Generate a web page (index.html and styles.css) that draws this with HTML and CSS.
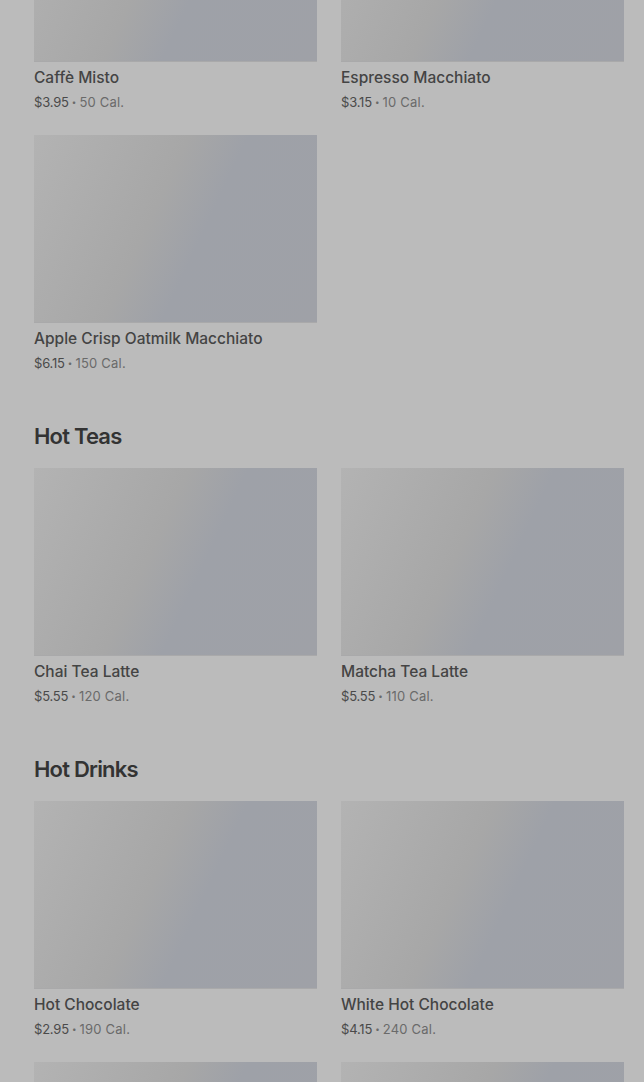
FILE: index.html
```html
<!DOCTYPE html>
<html lang="en">
<head>
  <meta charset="UTF-8">
  <title>Menu</title>
  <link rel="stylesheet" href="styles.css">
</head>
<body>
  <div class="menu">

    <!-- Hot Coffees (scrolled) -->
    <section class="category">
      <div class="grid">
        <div class="product">
          <div class="thumb"></div>
          <h3>Caffè Misto</h3>
          <p class="meta"><span class="price">$3.95</span><span class="dot">•</span>50 Cal.</p>
        </div>
        <div class="product">
          <div class="thumb"></div>
          <h3>Espresso Macchiato</h3>
          <p class="meta"><span class="price">$3.15</span><span class="dot">•</span>10 Cal.</p>
        </div>
        <div class="product">
          <div class="thumb"></div>
          <h3>Apple Crisp Oatmilk Macchiato</h3>
          <p class="meta"><span class="price">$6.15</span><span class="dot">•</span>150 Cal.</p>
        </div>
      </div>
    </section>

    <section class="category">
      <h2>Hot Teas</h2>
      <div class="grid">
        <div class="product">
          <div class="thumb"></div>
          <h3>Chai Tea Latte</h3>
          <p class="meta"><span class="price">$5.55</span><span class="dot">•</span>120 Cal.</p>
        </div>
        <div class="product">
          <div class="thumb"></div>
          <h3>Matcha Tea Latte</h3>
          <p class="meta"><span class="price">$5.55</span><span class="dot">•</span>110 Cal.</p>
        </div>
      </div>
    </section>

    <section class="category">
      <h2>Hot Drinks</h2>
      <div class="grid">
        <div class="product">
          <div class="thumb"></div>
          <h3>Hot Chocolate</h3>
          <p class="meta"><span class="price">$2.95</span><span class="dot">•</span>190 Cal.</p>
        </div>
        <div class="product">
          <div class="thumb"></div>
          <h3>White Hot Chocolate</h3>
          <p class="meta"><span class="price">$4.15</span><span class="dot">•</span>240 Cal.</p>
        </div>
        <div class="product">
          <div class="thumb"></div>
        </div>
        <div class="product">
          <div class="thumb"></div>
        </div>
      </div>
    </section>

  </div>
</body>
</html>
```

FILE: styles.css
```css
body {
  font-family: 'Inter', 'Noto Sans', sans-serif;
  background: #bbbbbb;
  margin: 0;
  padding: 0;
  overflow: hidden;
}

.menu {
  padding: 0 20px 0 34px;
  margin-top: -126px;
}

.category {
  margin-bottom: 48px;
}

.category h2 {
  font-size: 22px;
  font-weight: 600;
  letter-spacing: -0.8px;
  line-height: 30px;
  color: #333;
  margin: 0 0 17px;
}

.grid {
  display: grid;
  grid-template-columns: 1fr 1fr;
  column-gap: 24px;
  row-gap: 23px;
}

.thumb {
  height: 188px;
  background: linear-gradient(115deg, #b3b3b3 0%, #a7a7a7 42%, #9ea1a8 58%, #9fa1a7 100%);
  border-bottom: 1px solid #a9a9aa;
  box-sizing: border-box;
}

.product h3 {
  font-size: 15.5px;
  font-weight: 500;
  line-height: 20px;
  color: #444;
  margin: 6px 0 0;
}

.meta {
  font-size: 13px;
  line-height: 20px;
  color: #6a6a6a;
  margin: 4px 0 0;
  letter-spacing: 0.2px;
}

.price {
  color: #4a4a4a;
  letter-spacing: -0.2px;
}

.dot {
  font-size: 8px;
  margin: 0 3px;
  vertical-align: 2px;
}
```
